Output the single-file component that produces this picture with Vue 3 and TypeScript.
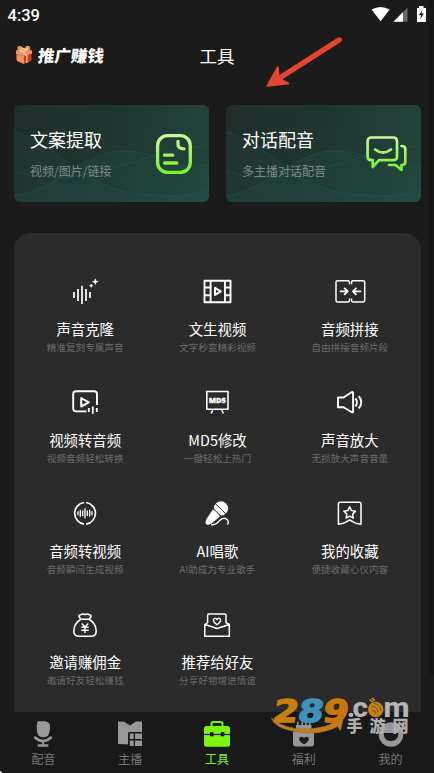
<script setup lang="ts">
interface Tool {
  icon: string
  title: string
  desc: string
}
interface Tab {
  id: string
  label: string
}

const tools: Tool[] = [
  { icon: 'clone', title: '声音克隆', desc: '精准复刻专属声音' },
  { icon: 'film', title: '文生视频', desc: '文字秒变精彩视频' },
  { icon: 'merge', title: '音频拼接', desc: '自由拼接音频片段' },
  { icon: 'video', title: '视频转音频', desc: '视频音频轻松转换' },
  { icon: 'md5', title: 'MD5修改', desc: '一键轻松上热门' },
  { icon: 'speaker', title: '声音放大', desc: '无损放大声音音量' },
  { icon: 'wave', title: '音频转视频', desc: '音频瞬间生成视频' },
  { icon: 'sing', title: 'AI唱歌', desc: 'AI助成为专业歌手' },
  { icon: 'star', title: '我的收藏', desc: '便捷收藏心仪内容' },
  { icon: 'bag', title: '邀请赚佣金', desc: '邀请好友轻松赚钱' },
  { icon: 'letter', title: '推荐给好友', desc: '分享好物增进情谊' },
]

const features = [
  { id: 'doc', title: '文案提取', desc: '视频/图片/链接' },
  { id: 'chat', title: '对话配音', desc: '多主播对话配音' },
]

const tabs: Tab[] = [
  { id: 'dub', label: '配音' },
  { id: 'host', label: '主播' },
  { id: 'tools', label: '工具' },
  { id: 'gift', label: '福利' },
  { id: 'me', label: '我的' },
]
</script>

<template>
  <div class="screen">
    <header class="status">
      <span class="clock">4:39</span>
      <svg class="signals" width="56" height="18" viewBox="0 0 56 18">
        <path d="M.5 3.600Q9.500-1.600 18.700 3.600L9.600 15.200Z" fill="#fff" />
        <path d="M36.500 1.500V15.700H22.500Z" fill="#666" />
        <path d="M32 6V15.700H22.500Z" fill="#fff" />
        <path d="M48 0h4.500v2H55v14h-9V2h2z" fill="#fff" />
        <path d="M51.200 4l-3.400 5.200h2.300l-.8 4 3.600-5.600h-2.400z" fill="#1b1b1b" />
      </svg>
    </header>

    <div class="titlebar">
      <div class="promo">
        <svg class="gift" width="18" height="20" viewBox="0 0 18 20">
          <path d="M3 5Q1 1 4.500 1Q7.500 1 9 5Q11-.5 14 1Q16 2 14.500 5.500Z" fill="#f29a3c" />
          <path d="M1 5.500L9 3L17 5.500V9L9 11L1 9Z" fill="#ff8a60" />
          <path d="M1.500 9L9 11V19L3 16.500Q1.500 16 1.500 14Z" fill="#ff8d54" />
          <path d="M16.500 9L9 11V19L15 16.500Q16.500 16 16.500 14Z" fill="#d93c20" />
          <path d="M4 5.500L7 4.500L12.500 10V17.500L11 18.200V11Z" fill="#ffc078" />
          <path d="M6 3Q10 3 10 6Q7 7 5 5M13 4Q10 4 9 7" fill="none" stroke="#ffe1a0" stroke-width="1.200" />
        </svg>
        <span class="promo-text">推广赚钱</span>
      </div>
      <h1>工具</h1>
    </div>

    <section class="features">
      <article v-for="f in features" :key="f.id" class="feature">
        <svg class="waves" viewBox="0 0 195 97" preserveAspectRatio="none">
          <path d="M0 27C40 35 70 85 125 89S180 88 195 84V97H0Z" fill="#28706b" fill-opacity=".09" />
          <path d="M0 91C50 82 70 45 110 46S160 68 195 59V97H0Z" fill="#24796f" fill-opacity=".09" />
          <path d="M0 27C40 35 70 85 125 89S180 88 195 84M0 91C50 82 70 45 110 46S160 68 195 59M0 66C70 88 110 50 195 40" fill="none" stroke="#28666b" stroke-opacity=".45" stroke-width=".8" />
        </svg>
        <div class="feature-copy">
          <h2>{{ f.title }}</h2>
          <p>{{ f.desc }}</p>
        </div>
        <svg v-if="f.id === 'doc'" class="feature-icon" width="42" height="42" viewBox="0 0 42 42">
          <defs>
            <linearGradient id="lime1" x1="0" y1="0" x2="0" y2="42" gradientUnits="userSpaceOnUse">
              <stop offset="0" stop-color="#d3f79a" /><stop offset="1" stop-color="#71f321" />
            </linearGradient>
          </defs>
          <g fill="none" stroke="url(#lime1)" stroke-width="3.300" stroke-linecap="round">
            <rect x="4.600" y="2.600" width="32.700" height="36.800" rx="10" />
            <path d="M25 8.500v2.800q0 4.500 6 4.500M11.500 22.200h8.300M11.500 30h12.300" />
          </g>
        </svg>
        <svg v-else class="feature-icon" width="42" height="42" viewBox="0 0 42 42">
          <defs>
            <linearGradient id="lime2" x1="0" y1="3" x2="0" y2="38" gradientUnits="userSpaceOnUse">
              <stop offset="0" stop-color="#d3f79a" /><stop offset="1" stop-color="#71f321" />
            </linearGradient>
          </defs>
          <g fill="none" stroke="url(#lime2)" stroke-width="2.700" stroke-linecap="round" stroke-linejoin="round">
            <path d="M6.500 4.500H28Q32 4.500 32 8.500V23.500Q32 27.200 28 27.200H14L7.700 34V27.200H6Q2.600 27.200 2.600 23.500V8.500Q2.600 4.500 6.500 4.500Z" />
            <path d="M10 16.500Q18 22.500 26 16.500M36.500 13Q40.300 13 40.300 16V29Q40.300 32 36.500 32V37L30.500 32H24" />
          </g>
        </svg>
      </article>
    </section>

    <main class="panel">
      <div v-for="t in tools" :key="t.title" class="tool">
        <svg class="tool-icon" width="28" height="28" viewBox="0 0 28 28" fill="none" stroke="#fff" stroke-width="1.600" stroke-linejoin="round">
          <g v-if="t.icon === 'clone'">
            <path d="M3 15v6M7 12v12M11 8.700V27M15 12v12M19 15v6" stroke-width="1.700" />
            <path d="M24.300 1.800l.8 2.100 2.100.8-2.100.8-.8 2.100-.8-2.100-2.100-.8 2.100-.8zM20.200 7l.5 1.200 1.200.5-1.200.5-.5 1.200-.5-1.200-1.200-.5 1.200-.5z" fill="#fff" stroke-width=".5" />
          </g>
          <g v-else-if="t.icon === 'film'">
            <rect x="1.500" y="3.700" width="26" height="21.500" stroke-width="1.900" />
            <path d="M7.600 4v21M22 4v21M1 10.500h6.500M1 18.300h6.500M22 10.500h6M22 18.300h6" stroke-width="1.900" />
            <path d="M12 10.900v7l5.800-3.500z" stroke-width="2" />
          </g>
          <g v-else-if="t.icon === 'merge'">
            <path d="M13.500 7.200V5.500Q13.500 3.800 12 3.800H1.500Q0 3.800 0 5.300V23.500Q0 25 1.500 25H12Q13.500 25 13.500 23.300V21.600M15.500 7.200V5.500Q15.500 3.800 17 3.800H27Q28.700 3.800 28.700 5.300V23.500Q28.700 25 27 25H17Q15.500 25 15.500 23.300V21.600" stroke-width="1.500" />
            <path d="M3.800 14.300h7.800M8.200 10.800l3.500 3.500-3.500 3.500M25.200 14.300H17M20.400 10.800l-3.500 3.500 3.500 3.500" stroke-width="1.800" />
          </g>
          <g v-else-if="t.icon === 'video'">
            <path d="M15.500 23.400H5Q2.200 23.400 2.200 20.600V6Q2.200 3.300 5 3.300H23Q26 3.300 26 6V17" stroke-width="1.900" />
            <path d="M10.200 10v8.500l7.600-4.200z" stroke-width="2" />
            <path d="M17.800 20v4M21.800 18.400v7.300M25.800 20v4" stroke-width="1.800" />
          </g>
          <g v-else-if="t.icon === 'md5'">
            <path d="M3.800 3.300v18h21.200v-18M2.800 3.500h23M9.700 22l-1.500 3.300M18.800 22l1.500 3.300" stroke-width="1.600" />
            <text x="14.400" y="15.200" text-anchor="middle" class="md5-text">MD5</text>
          </g>
          <g v-else-if="t.icon === 'speaker'">
            <path d="M2 9.500h5.500l8-5.200q1.600-.8 1.600.8v18.400q0 1.500-1.600.5l-8-4.700H2z" stroke-width="1.900" />
            <path d="M19.400 10.300q3.100 4 0 8M22.700 8.200q5.300 6.100 0 12.200" stroke-width="1.900" />
          </g>
          <g v-else-if="t.icon === 'wave'">
            <path d="M15 3.500A10.900 10.900 0 0 1 15 25.100M13.100 25.100A10.900 10.900 0 0 1 13.100 3.500" stroke-width="1.700" />
            <path d="M7 12.300v4M9.300 10.800v7M11.700 11.500v5.600M14 9.300v10M16.300 11.500v5.600M18.700 10.800v7M21 12.300v4" stroke-width="1.300" />
          </g>
          <g v-else-if="t.icon === 'sing'">
            <circle cx="17.900" cy="9.500" r="7.200" fill="#fff" stroke="none" />
            <path d="M9.800 10.600L17 17.600L8.500 24.500Q4.500 27 2.800 24.800Q1.800 23 3.500 20Z" fill="#fff" stroke="none" />
            <path d="M12.200 4.500L23 15M10.300 9.600l7.600 7.500" stroke="#2b2b2b" stroke-width="1" />
            <path d="M8 25.800Q13 26.300 16.400 21.700Q20.500 17.500 24 20.500Q26.200 22.400 24.500 25.800" stroke-width="1.400" />
          </g>
          <g v-else-if="t.icon === 'star'">
            <path d="M4.200 3.200H23.200Q25 3.200 25 5V25.300L20 24.300L13.700 21L7.400 24.300L2.400 25.300V5Q2.400 3.200 4.200 3.200Z" stroke-width="1.500" />
            <path d="M13.700 7.900l1.800 3.700 4 .6-2.900 2.900.7 4-3.600-1.900-3.600 1.900.7-4-2.900-2.900 4-.6z" stroke-width="1.500" />
          </g>
          <g v-else-if="t.icon === 'bag'">
            <path d="M9.800 8.200L8 5.500Q7.800 3.600 10 3.700Q12 2.400 14 3.700Q16 2.400 18 3.700Q20.300 3.500 20 5.500L18.200 8.200Q25 12.500 25.200 20Q25.200 25.300 20 25.300H8Q2.800 25.300 2.800 20Q3 12.500 9.800 8.200ZM9.500 8.200H18.500" stroke-width="1.600" />
            <path d="M10.800 12.500L14 16L17.200 12.500M14 16V22M10.300 16.300H17.700M10.300 19.200H17.700" stroke-width="1.400" />
          </g>
          <g v-else>
            <path d="M4.600 12V4.300Q4.600 3 5.900 3H21.700Q23 3 23 4.300V12M4.800 11.500L1.800 13.500V25.300H26.300V13.500L22.800 11.500M2 13.500L14 17.500L26.300 13.500" stroke-width="1.500" />
            <path d="M14 13.800Q9 10 11 7.800Q12.800 6.500 14 8.600Q15.300 6.500 17.100 7.800Q19 10 14 13.800Z" stroke-width="1.400" />
          </g>
        </svg>
        <h3>{{ t.title }}</h3>
        <p>{{ t.desc }}</p>
      </div>
    </main>

    <nav class="tabs">
      <a v-for="tab in tabs" :key="tab.id" class="tab" :class="{ active: tab.id === 'tools' }">
        <svg width="28" height="28" viewBox="0 0 28 28" fill="#989898">
          <g v-if="tab.id === 'dub'">
            <path d="M9 1.300H16Q22 2 21 9L19.800 14Q18.500 17.300 14.500 17.300Q9 17.300 8 12L7.700 6Q7.700 3 9 1.300Z" />
            <path d="M6 17.500Q14 24.500 22 17.500M14 21v4M9.700 25.500H18.300" fill="none" stroke="#989898" stroke-width="2.400" stroke-linecap="round" />
          </g>
          <g v-else-if="tab.id === 'host'">
            <path d="M2 1.500L8 1.700L14 5.500L20 1.500H26V12H14V24.500L2 24Z" />
            <path d="M12 12.300h14v14H12z" fill="#191919" />
            <path d="M13.800 13.600h3.900V19h-3.900zM19 13.600h7V19h-7zM13.800 20.500h3.900v5.500h-3.900zM19 20.500h7v5.500h-7z" />
          </g>
          <g v-else-if="tab.id === 'tools'" fill="#7df60d">
            <path d="M8.500 6V3.500Q8.500 2 10 2H18Q19.500 2 19.500 3.500V6" fill="none" stroke="#7df60d" stroke-width="2" />
            <rect x="1" y="6" width="26" height="20.700" rx="2.500" />
            <path d="M1 14.500H27" stroke="#191919" stroke-width="1.200" />
            <path d="M7 12h3.500v4.200h-3.500zM17.800 12h3.500v4.200h-3.500z" fill="#191919" />
          </g>
          <g v-else-if="tab.id === 'gift'">
            <path d="M3 11.500H24V23.500Q24 26.500 21 26.500H6Q3 26.500 3 23.500ZM6 5h15.500v4H6zM7 1.500h1.500V5H7zM11.500 2h1.500v3h-1.500zM15 1.500h1.500V5H15zM19 2h1.500v3H19z" />
            <path d="M14 24.500Q7.500 20 9.500 17.500Q11.800 15.700 14 18Q16.200 15.700 18.500 17.500Q20.500 20 14 24.500Z" fill="#191919" />
          </g>
          <g v-else>
            <circle cx="14" cy="14.500" r="12.200" />
            <path d="M6.500 13H21.500Q21 21 14 21Q7 21 6.500 13Z" fill="#191919" />
          </g>
        </svg>
        <span>{{ tab.label }}</span>
      </a>
    </nav>

    <i class="edge" />
    <i class="corner" />

    <svg class="arrow" width="82" height="54" viewBox="0 0 82 54">
      <path d="M1 51.700Q0 52 .7 50.200L11 31.500Q12.800 30.500 13 33.500L13.400 40L71.500 2.800Q75.300 1.300 76 4.500Q76.200 6.500 74 7.500L16.500 44.300L22 47.300Q24.500 49 22 49.500Z" fill="#e8432c" />
    </svg>

    <svg class="watermark" width="142" height="42" viewBox="0 0 142 42">
      <path d="M1.500 23Q14 35 40 34Q57 32 64 27.500L58 26.500L74 20L70.500 35.500L67.500 31.500Q54 38.800 36 38Q5 35 1.500 23Z" fill="#c77c18" stroke="#9b7134" stroke-width=".6" />
      <g class="brand" stroke-width="1.400" stroke-linejoin="round" transform="translate(0 26.500) skewX(-10)">
        <text x="1.500" y="0" fill="#c9800b" stroke="#c9800b" textLength="25.500" lengthAdjust="spacingAndGlyphs">2</text>
        <text x="26.500" y="0" fill="#3f92bb" stroke="#3f92bb" textLength="25.500" lengthAdjust="spacingAndGlyphs">8</text>
        <text x="51.500" y="0" fill="#c9760b" stroke="#c9760b" textLength="25.500" lengthAdjust="spacingAndGlyphs">9</text>
      </g>
      <g class="domain" fill="#b4b4b4">
        <text x="77" y="22">.</text>
        <text x="82.500" y="22" textLength="15.500" lengthAdjust="spacingAndGlyphs">c</text>
        <text x="113.500" y="22" textLength="26" lengthAdjust="spacingAndGlyphs">m</text>
      </g>
      <circle cx="105.700" cy="14.500" r="7.700" fill="#c9800b" />
      <path d="M100 4.500l2.500 2.500M102.500 3l2 3" fill="none" stroke="#c9800b" stroke-width="1.800" />
      <path d="M101 11.500q6-1 7 6M103 8.500q7 0 8 7M102 15q3 0 4 4" fill="none" stroke="#6b5a31" />
      <g class="watermark-cn" fill="#b0b0b0">
        <text x="76.500" y="36.500">手</text>
        <text x="99.500" y="36.500">游</text>
        <text x="122.500" y="36.500">网</text>
      </g>
    </svg>
  </div>
</template>

<style>
html, body { background: #1b1b1b; overflow: hidden; }
</style>

<style scoped>
.screen {
  position: relative;
  display: flex;
  flex-direction: column;
  width: 434px;
  height: 773px;
  overflow: hidden;
  background: #1b1b1b;
  color: #fff;
  font-family: "Noto Sans CJK SC", sans-serif;
}
h1, h2, h3, p { margin: 0; font-weight: 400; }
svg { display: block; flex: none; }
.status {
  display: flex;
  justify-content: space-between;
  height: 32px;
  padding: 6px 8px 0 7.500px;
  box-sizing: border-box;
}
.clock { font: 500 16.500px/19px Roboto, sans-serif; }
.signals { margin-right: -1px; }
.titlebar {
  display: grid;
  grid-template-columns: 1fr auto 1fr;
  align-items: center;
  height: 48px;
  padding: 0 15px;
}
.promo { display: flex; align-items: center; gap: 5px; margin-top: -3px; }
.promo-text { font-size: 16.500px; font-weight: 900; line-height: 20px; transform: skewX(-7deg); }
.titlebar h1 { font-size: 17.500px; line-height: 24px; }
.features { display: flex; gap: 17px; padding: 25px 13px 0 14px; }
.feature {
  position: relative;
  display: flex;
  align-items: center;
  justify-content: space-between;
  width: 195px;
  height: 97px;
  padding: 0 14.500px 0 16px;
  box-sizing: border-box;
  border-radius: 6px;
  overflow: hidden;
  background: linear-gradient(100deg, #202e2b, #1f3731 50%, #23443d);
}
.waves { position: absolute; inset: 0; width: 100%; height: 100%; }
.feature-copy { position: relative; }
.feature-icon { position: relative; overflow: visible; }
.feature h2 { margin-top: -1px; font-size: 18px; line-height: 26px; }
.feature p { margin-top: 10px; font-size: 12px; line-height: 18px; color: #7f8b88; }
.panel {
  display: grid;
  grid-template-columns: repeat(3, 1fr);
  grid-auto-rows: 111.200px;
  align-content: start;
  height: 479px;
  margin: 31px 13px 0 14px;
  padding: 44px 5px 0;
  box-sizing: border-box;
  border-radius: 17px 17px 0 0;
  background: #2b2b2b;
}
.tool { display: flex; flex-direction: column; align-items: center; }
.tool-icon { overflow: visible; }
.tool h3 { margin-top: 13.500px; font-size: 14.400px; line-height: 20px; }
.tool p { margin-top: 1px; font-size: 9.600px; line-height: 14px; color: #6a6a6a; white-space: nowrap; }
.md5-text { font: 800 7.500px "Open Sans", sans-serif; fill: #fff; stroke: #fff; stroke-width: .3px; }
.tabs {
  display: grid;
  grid-template-columns: repeat(5, 1fr);
  height: 61px;
  padding-top: 8px;
  box-sizing: border-box;
  background: #191919;
}
.tab { display: flex; flex-direction: column; align-items: center; }
.tab span { margin-top: 3px; font-size: 12px; line-height: 16px; color: #777; }
.tab.active span { color: #7df60d; }
.edge { position: absolute; right: 0; top: 0; width: 4px; height: 675px; background: #151515; }
.corner { position: absolute; left: 0; bottom: 0; width: 2px; height: 3px; background: linear-gradient(45deg, #ddd 45%, transparent 55%); }
.arrow { position: absolute; left: 266px; top: 35px; }
.watermark { position: absolute; left: 270px; top: 695px; overflow: visible; }
.brand { font: 700 31px "DejaVu Sans", sans-serif; }
.domain { font: 800 27px Roboto, sans-serif; }
.watermark-cn { font: 900 16px "Noto Sans CJK SC", sans-serif; }
</style>
